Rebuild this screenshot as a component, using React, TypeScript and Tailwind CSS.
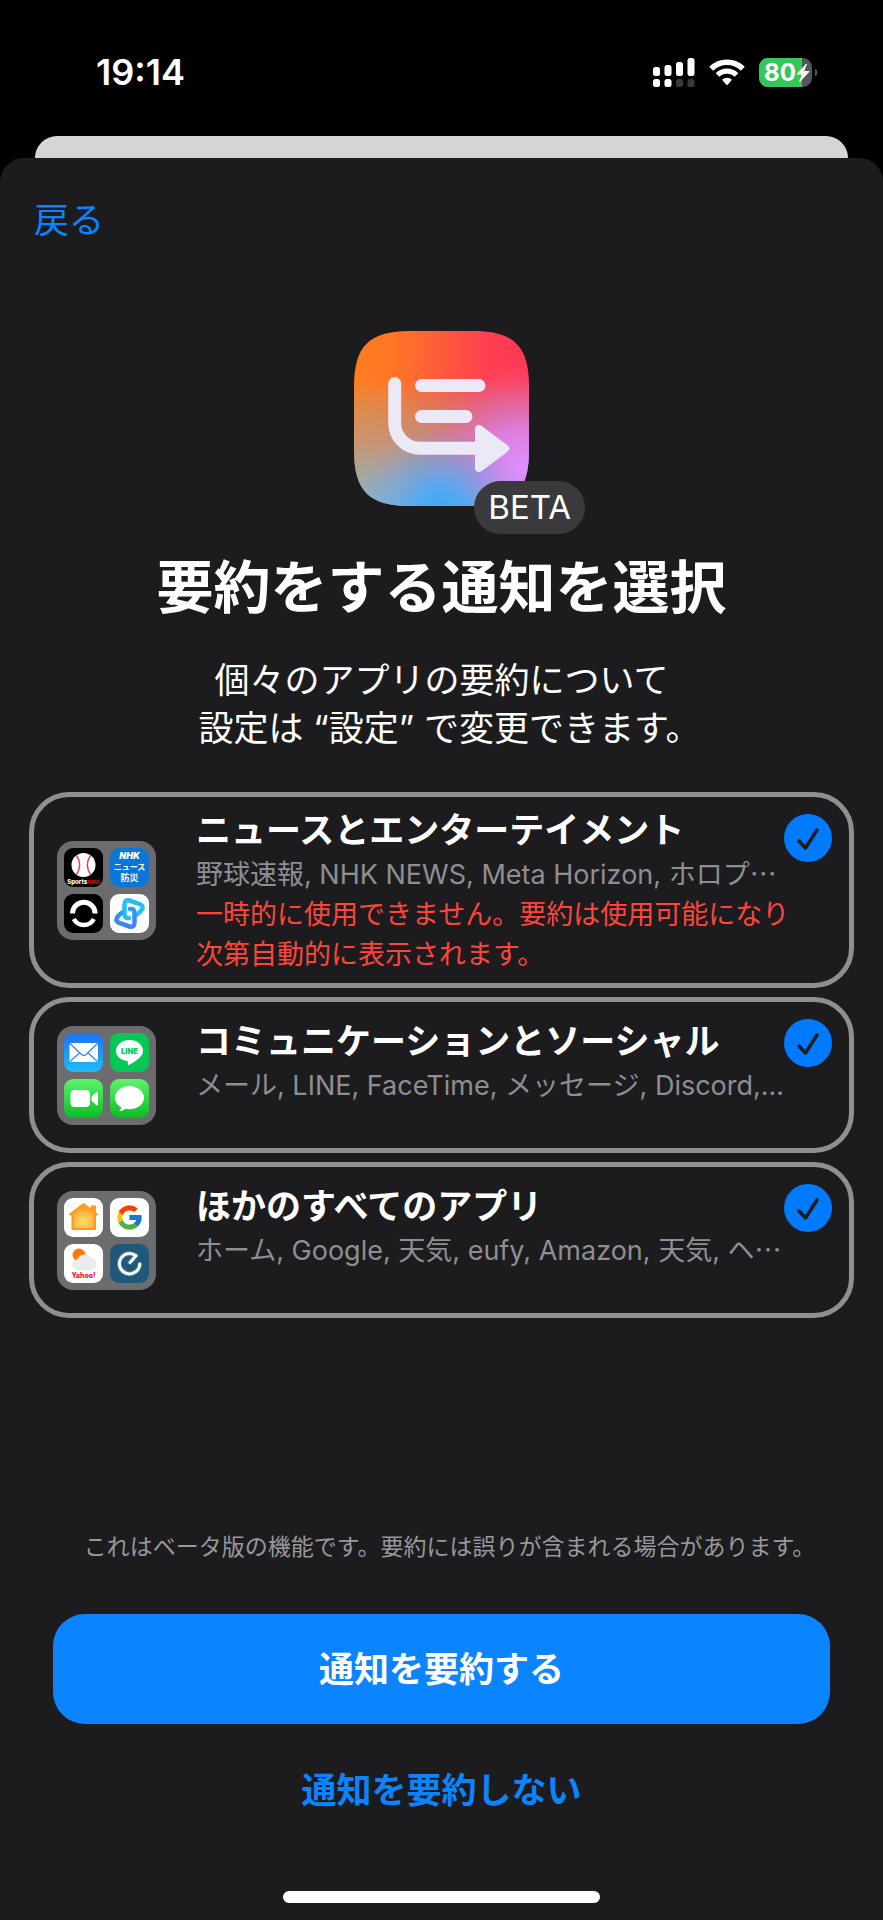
import React, { useState } from "react";
import { FcGoogle } from "react-icons/fc";

const latin = "Inter, 'Noto Sans CJK JP', sans-serif";

function StatusBar() {
  return (
    <header className="flex h-34 items-start justify-between pt-12 pr-16 pl-24 text-white">
      <time className="text-4xl leading-12 font-semibold">19:14</time>
      <div className="flex h-12 items-center gap-[14px]">
        {/* dual sim signal */}
        <svg width="42" height="29" viewBox="0 0 42 29" fill="#fff">
          <rect x="0" y="9" width="7" height="9" rx="2.5" />
          <rect x="11.5" y="7" width="7" height="11" rx="2.5" />
          <rect x="23" y="4" width="7" height="14" rx="2.5" />
          <rect x="34.5" y="0" width="7" height="18" rx="2.5" />
          <rect x="0" y="21" width="7" height="8" rx="2.5" />
          <rect x="11.5" y="21" width="7" height="8" rx="2.5" />
          <rect x="23" y="21" width="7" height="8" rx="2.5" fill="#3a3a3c" />
          <rect x="34.5" y="21" width="7" height="8" rx="2.5" fill="#3a3a3c" />
        </svg>
        {/* wifi */}
        <svg width="36" height="27" viewBox="0 0 36 27" fill="none">
          <path d="M2.2 9.8a22.5 22.5 0 0 1 31.6 0" stroke="#fff" strokeWidth="5.6" />
          <path d="M8.5 16a13.6 13.6 0 0 1 19 0" stroke="#fff" strokeWidth="5.2" />
          <path
            d="M13 20.7a7.4 7.4 0 0 1 10 0l-3.900 4.600a1.500 1.500 0 0 1-2.200 0z"
            fill="#fff"
          />
        </svg>
        {/* battery */}
        <svg width="60" height="29" viewBox="0 0 60 29">
          <defs>
            <clipPath id="battery-shape">
              <rect width="53" height="29" rx="9" />
            </clipPath>
          </defs>
          <g clipPath="url(#battery-shape)">
            <rect width="53" height="29" fill="#555557" />
            <rect width="43" height="29" fill="#34c759" />
          </g>
          <path d="M56 10.5a4.5 4.5 0 0 1 0 8z" fill="#555557" />
          <text
            x="21"
            y="23"
            textAnchor="middle"
            fontFamily={latin}
            fontSize="24"
            fontWeight="700"
            fill="#fff"
          >
            80
          </text>
          <path
            d="M47.5 6 38 16h5.5l-3 8L50 13.5h-5.5z"
            fill="#fff"
            stroke="#fff"
            strokeLinejoin="round"
          />
        </svg>
      </div>
    </header>
  );
}

function SummaryIcon() {
  return (
    <svg width="175" height="175" viewBox="0 0 175 175">
      <defs>
        <clipPath id="hero-shape">
          <path d="M0 56C0 15 15 0 56 0h63c41 0 56 15 56 56v63c0 41-15 56-56 56H56c-41 0-56-15-56-56z" />
        </clipPath>
        <linearGradient id="hero-base" x1="0" y1="0" x2="1" y2="0">
          <stop offset="0" stopColor="#ff7d1e" />
          <stop offset="0.25" stopColor="#ff7428" />
          <stop offset="0.75" stopColor="#ff4150" />
          <stop offset="1" stopColor="#ff3754" />
        </linearGradient>
        <linearGradient id="hero-teal" x1="0" y1="0.28" x2="0" y2="1">
          <stop offset="0" stopColor="#82bcc0" stopOpacity="0" />
          <stop offset="0.45" stopColor="#a8a3a0" stopOpacity="0.6" />
          <stop offset="1" stopColor="#7cbcd0" />
        </linearGradient>
        <radialGradient id="hero-violet" cx="0.96" cy="0.78" r="0.6">
          <stop offset="0" stopColor="#dd90ff" />
          <stop offset="0.35" stopColor="#e080f0" stopOpacity="0.85" />
          <stop offset="0.7" stopColor="#e86ab8" stopOpacity="0.4" />
          <stop offset="1" stopColor="#ff5a90" stopOpacity="0" />
        </radialGradient>
        <radialGradient id="hero-blue" cx="0.5" cy="1.02" r="0.48">
          <stop offset="0" stopColor="#3eaaf8" />
          <stop offset="0.3" stopColor="#52a8f4" stopOpacity="0.9" />
          <stop offset="1" stopColor="#8a9ae0" stopOpacity="0" />
        </radialGradient>
      </defs>
      <g clipPath="url(#hero-shape)">
        <rect width="175" height="175" fill="url(#hero-base)" />
        <rect width="175" height="175" fill="url(#hero-teal)" />
        <rect width="175" height="175" fill="url(#hero-violet)" />
        <rect width="175" height="175" fill="url(#hero-blue)" />
      </g>
      <g fill="none" stroke="#ebe9f5" strokeWidth="13" strokeLinecap="round">
        <path d="M40.7 52.5V92a25.3 25.3 0 0 0 25.3 25.3h58" />
        <path d="M67.5 54.5h57.5M67.5 85.5h44.5" />
      </g>
      <path
        d="M125 98v39l26-19.5z"
        fill="#ebe9f5"
        stroke="#ebe9f5"
        strokeWidth="8"
        strokeLinejoin="round"
      />
    </svg>
  );
}

function Tile({ fill, children }: { fill: string; children: React.ReactNode }) {
  return (
    <svg width="39" height="39" viewBox="0 0 39 39">
      <rect width="39" height="39" rx="9" fill={fill} />
      {children}
    </svg>
  );
}

function NewsIcons() {
  return (
    <>
      <Tile fill="#000">
        <circle cx="19.5" cy="17" r="12" fill="#fff" />
        <path
          d="M12.5 7.5c4 6 4 13 0 19M26.5 7.5c-4 6-4 13 0 19"
          fill="none"
          stroke="#e8425a"
          strokeWidth="1.5"
        />
        <text
          x="19.5"
          y="35.5"
          textAnchor="middle"
          fontFamily={latin}
          fontSize="6"
          fontWeight="800"
          fill="#fff"
        >
          Sports<tspan fill="#e60020">navi</tspan>
        </text>
      </Tile>
      <Tile fill="#0b76d5">
        <g textAnchor="middle" fontFamily={latin} fontWeight="700" fill="#fff">
          <text x="19.5" y="11" fontSize="9" fontWeight="900" fontStyle="italic">
            NHK
          </text>
          <text x="19.5" y="22" fontSize="8">
            ニュース
          </text>
          <text x="19.5" y="33" fontSize="9">
            防災
          </text>
        </g>
      </Tile>
      <Tile fill="#000">
        <path
          d="M8.500 19.500a11.300 11.300 0 0 1 22.600 0"
          fill="none"
          stroke="#fff"
          strokeWidth="5"
        />
        <path
          d="M9.800 25a11.300 11.300 0 0 0 20 0"
          fill="none"
          stroke="#fff"
          strokeWidth="4.5"
        />
      </Tile>
      <Tile fill="#fff">
        <defs>
          <linearGradient id="link-blue" x1="0" y1="0" x2="0" y2="1">
            <stop offset="0" stopColor="#2b9bf8" />
            <stop offset="1" stopColor="#4080f6" />
          </linearGradient>
        </defs>
        <g
          fill="none"
          strokeWidth="4.5"
          strokeLinecap="round"
          strokeLinejoin="round"
        >
          <path
            d="M19 24c-3 .5-4.500-1-4.500-4V10.500c0-3.500 2-5 5-4l9.500 3.300c3.500 1.200 4.300 3 3 5.500-1 2-2.500 3.500-5 5.200"
            stroke="#25bff9"
          />
          <path
            d="M20 15c3-.5 4.500 1 4.500 4v9.500c0 3.500-2 5-5 4L10 29.200c-3.500-1.200-4.300-3-3-5.500 1-2 2.500-3.500 5-5.200"
            stroke="url(#link-blue)"
          />
        </g>
      </Tile>
    </>
  );
}

function SocialIcons() {
  return (
    <>
      <svg width="39" height="39" viewBox="0 0 39 39">
        <defs>
          <linearGradient id="mail-bg" x1="0" y1="0" x2="0" y2="1">
            <stop offset="0" stopColor="#1e72f0" />
            <stop offset="1" stopColor="#1ebcfb" />
          </linearGradient>
          <linearGradient id="green-bg" x1="0" y1="0" x2="0" y2="1">
            <stop offset="0" stopColor="#5df46d" />
            <stop offset="1" stopColor="#0abd22" />
          </linearGradient>
        </defs>
        <rect width="39" height="39" rx="9" fill="url(#mail-bg)" />
        <rect x="5.5" y="10" width="28.5" height="19" rx="2.5" fill="#fff" />
        <path
          d="m6.500 11 11 10.500c1.500 1.300 3 1.300 4.500 0L33 11M6.500 28l9.500-8.500M33 28l-9.500-8.500"
          fill="none"
          stroke="#2b8bf4"
          strokeWidth="1.3"
        />
      </svg>
      <Tile fill="#06c755">
        <path
          d="M19.500 7C12 7 6 11.800 6 17.700c0 5.200 4.500 9.300 10.700 10.300 1.600.3 1.300 1.200 1 3.300-.1.800.5 1.100 1.400.6 4.700-2.600 13.900-7.600 13.900-14.200C33 11.800 27 7 19.500 7z"
          fill="#fff"
        />
        <text
          x="19.5"
          y="20.5"
          textAnchor="middle"
          fontFamily={latin}
          fontSize="7.5"
          fontWeight="900"
          fill="#06c755"
        >
          LINE
        </text>
      </Tile>
      <Tile fill="url(#green-bg)">
        <rect x="6.5" y="11" width="19.5" height="17" rx="4" fill="#fff" />
        <path
          d="M27.500 17.500l5-4.500c.8-.6 1.500-.3 1.500.6v12c0 .9-.7 1.200-1.500.6l-5-4.500z"
          fill="#fff"
        />
      </Tile>
      <Tile fill="url(#green-bg)">
        <path
          d="M19.500 7C11.500 7 5 12.200 5 18.700c0 4 2.500 7.500 6.200 9.600-.2 1.500-1 2.800-2 3.900 2.500-.1 4.500-1 6.200-2.500 1.300.3 2.700.5 4.100.5 8 0 14.500-5 14.500-11.500S27.500 7 19.500 7z"
          fill="#fff"
        />
      </Tile>
    </>
  );
}

function OtherIcons() {
  return (
    <>
      <Tile fill="#fff">
        <defs>
          <radialGradient id="house" cx="0.5" cy="0.7" r="0.6">
            <stop offset="0" stopColor="#ffdf6e" />
            <stop offset="0.6" stopColor="#fdb843" />
            <stop offset="1" stopColor="#fb9a1c" />
          </radialGradient>
        </defs>
        <path
          d="M19.500 6 6 16.500h2.500V31h22.500V16.500H33L31 15V8.500h-3.500v3.700z"
          fill="url(#house)"
          stroke="#fb9a1c"
          strokeWidth="2"
          strokeLinejoin="round"
        />
      </Tile>
      <Tile fill="#fff">
        <FcGoogle size={29} x={5} y={5} />
      </Tile>
      <Tile fill="#fff">
        <circle cx="15" cy="11" r="6.5" fill="#ff7a00" />
        <path
          d="M14 25.500a5 5 0 0 1-.6-10 7.500 7.500 0 0 1 13.600-.8 5.500 5.500 0 0 1 .5 10.800z"
          fill="#ececec"
          stroke="#d6d6d6"
          strokeWidth="0.5"
        />
        <text
          x="19.5"
          y="34"
          textAnchor="middle"
          fontFamily={latin}
          fontSize="7"
          fontWeight="800"
          fill="#f0142f"
        >
          Yahoo!
        </text>
      </Tile>
      <Tile fill="#1f5878">
        <path
          d="M20 18.500 26 11.700A10.200 10.200 0 1 0 29.800 20"
          fill="none"
          stroke="#6fa8c4"
          strokeWidth="5"
          strokeLinecap="round"
          strokeLinejoin="round"
          opacity="0.4"
        />
        <path
          d="M20 18.500 26 11.700A10.200 10.200 0 1 0 29.800 20"
          fill="none"
          stroke="#fff"
          strokeWidth="3"
          strokeLinecap="round"
          strokeLinejoin="round"
        />
      </Tile>
    </>
  );
}

const groups = [
  {
    id: "news",
    title: "ニュースとエンターテイメント",
    apps: "野球速報, NHK NEWS, Meta Horizon, ホロプ",
    more: "⋯",
    warning: ["一時的に使用できません。要約は使用可能になり", "次第自動的に表示されます。"],
    icons: <NewsIcons />,
  },
  {
    id: "social",
    title: "コミュニケーションとソーシャル",
    apps: "メール, LINE, FaceTime, メッセージ, Discord,",
    more: "...",
    icons: <SocialIcons />,
  },
  {
    id: "others",
    title: "ほかのすべてのアプリ",
    apps: "ホーム, Google, 天気, eufy, Amazon, 天気, ヘ",
    more: "⋯",
    icons: <OtherIcons />,
  },
];

function App() {
  const [selected, setSelected] = useState<Record<string, boolean>>({
    news: true,
    social: true,
    others: true,
  });

  const toggle = (id: string) => {
    setSelected({ ...selected, [id]: !selected[id] });
  };

  return (
    <div
      lang="ja"
      className="flex min-h-screen flex-col bg-black font-[Inter,'Noto_Sans_CJK_JP',sans-serif]"
    >
      <StatusBar />
      <div className="mx-[35px] h-[22px] rounded-t-3xl bg-[#d5d5d7]" />

      <main className="flex flex-1 flex-col rounded-t-3xl bg-[#1c1c1e] pt-[38px] pb-[17px] text-white">
        <button
          type="button"
          className="ml-[34px] self-start text-[35px] leading-12 text-[#0a84ff]"
        >
          戻る
        </button>

        <div className="relative mt-[87px] self-center">
          <SummaryIcon />
          <span className="absolute -right-14 -bottom-7 rounded-full bg-[#3a3a3c] px-[14px] text-[33px] leading-[53px]">
            BETA
          </span>
        </div>

        <h1 className="mt-[42px] text-center text-[57px] leading-20 font-bold">
          要約をする通知を選択
        </h1>
        {/* the closing 。 hangs so its blank half does not count when centring */}
        <p className="mt-7 text-center text-[35px] leading-12">
          個々のアプリの要約について
          <br />
          設定は “設定” で変更できます<span className="-mr-4">。</span>
        </p>

        {/* notification groups */}
        <div className="mx-[29px] mt-10 flex flex-col gap-[9px]">
          {groups.map((group) => (
            <label
              key={group.id}
              htmlFor={group.id}
              className="relative flex min-h-39 items-center rounded-[40px] border-5 border-[#8e8e93] pl-[23px]"
            >
              <span className="grid shrink-0 grid-cols-2 gap-[7px] rounded-2xl bg-[#6c6c6e] p-[7px]">
                {group.icons}
              </span>
              <span
                className={`ml-10 flex min-w-0 flex-1 flex-col self-stretch pb-2 ${
                  group.warning ? "pt-2" : "pt-[14px]"
                }`}
              >
                <span className="text-[35px] leading-[50px] font-bold">
                  {group.title}
                </span>
                <span className="text-[27px] leading-10 whitespace-nowrap text-[#8e8e93]">
                  {group.apps}
                  {group.more}
                </span>
                {group.warning?.map((line) => (
                  <span
                    key={line}
                    className="text-[27px] leading-10 whitespace-nowrap text-[#ff453a]"
                  >
                    {line}
                  </span>
                ))}
              </span>
              <span className="absolute top-[17px] right-[17px] grid size-12">
                <input
                  id={group.id}
                  type="checkbox"
                  checked={selected[group.id]}
                  onChange={() => toggle(group.id)}
                  className="col-start-1 row-start-1 size-12 appearance-none rounded-full border-2 border-[#8e8e93] checked:border-0 checked:bg-[#007aff]"
                />
                {selected[group.id] && (
                  <svg
                    viewBox="0 0 48 48"
                    className="pointer-events-none col-start-1 row-start-1 size-12"
                  >
                    <path
                      d="M15 27l6.500 7L33 16"
                      fill="none"
                      stroke="#1c1c1e"
                      strokeWidth="3.5"
                      strokeLinecap="round"
                      strokeLinejoin="round"
                    />
                  </svg>
                )}
              </span>
            </label>
          ))}
        </div>

        {/* footer */}
        <p className="mt-auto text-center text-[23px] leading-8 text-[#98989d]">
          これはベータ版の機能です。要約には誤りが含まれる場合があります
          <span className="-mr-4">。</span>
        </p>
        <button
          type="button"
          className="mx-[53px] mt-[51px] rounded-[32px] bg-[#0a84ff] py-[29px] text-[35px] leading-[52px] font-bold"
        >
          通知を要約する
        </button>
        <button
          type="button"
          className="mt-10 self-center text-[35px] leading-[52px] font-bold text-[#0a84ff]"
        >
          通知を要約しない
        </button>
        <div className="mt-[75px] h-3 w-[317px] self-center rounded-full bg-white" />
      </main>
    </div>
  );
}

export default App;
